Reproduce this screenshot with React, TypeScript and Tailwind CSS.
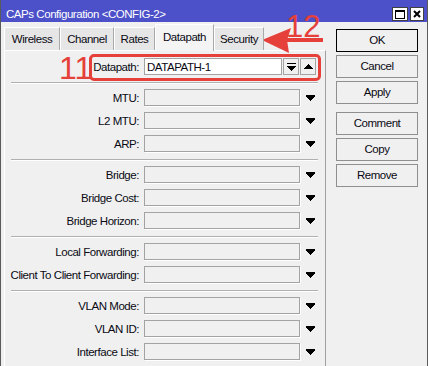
import React from "react";

function DownTri() {
  return (
    <svg width="9" height="6" viewBox="0 0 9 6" shapeRendering="crispEdges">
      <path d="M0 0h9v2h-1v1h-1v1h-1v1h-1v1h-1v-1h-1v-1h-1v-1h-1v-1h-1z" fill="#000" />
    </svg>
  );
}

function UpTri() {
  return (
    <svg width="9" height="5" viewBox="0 0 9 5" shapeRendering="crispEdges">
      <path d="M4 0h1v1h1v1h1v1h1v1h1v1h-9v-1h1v-1h1v-1h1v-1h1z" fill="#000" />
    </svg>
  );
}

function BarDown() {
  return (
    <svg width="9" height="8" viewBox="0 0 9 8" shapeRendering="crispEdges">
      <rect x="0" y="0" width="9" height="1" fill="#000" />
      <path d="M0 3h9v1h-1v1h-1v1h-1v1h-1v1h-1v-1h-1v-1h-1v-1h-1v-1h-1z" fill="#000" />
    </svg>
  );
}

function Row({ label }: { label: string }) {
  return (
    <div className="flex h-[17px] items-start">
      <div className="w-[134px] text-right leading-[19px] whitespace-nowrap">{label}</div>
      <div className="ml-[5px] w-[156px] h-[17px] border border-[#a3a3a3] bg-[#f0f0f0] shadow-[1px_1px_0_#ffffff]" />
      <div className="w-[21px] h-[17px] flex items-center justify-center">
        <DownTri />
      </div>
    </div>
  );
}

function Sep() {
  return <div className="ml-[6px] w-[307px] h-[2px] border-t border-[#b0b0b0] border-b border-b-white mt-[7px] mb-[5px]" />;
}

function Btn({ label, def, cls }: { label: string; def?: boolean; cls?: string }) {
  return (
    <div
      className={
        "w-[82px] h-[23px] flex items-center justify-center bg-[#f0f0f0] border " +
        (def ? "border-black " : "border-[#8f8f8f] ") +
        (cls ?? "")
      }
    >
      {label}
    </div>
  );
}

export default function App() {
  return (
    <div className="relative w-[428px] h-[366px] overflow-hidden bg-[#f0f0f0] font-['Liberation_Sans',Arial,sans-serif] text-[11.5px] tracking-[-0.45px] text-[#0a0a14]">
      <div className="w-[428px] h-[366px] border-l border-r border-[#5a5a5a] flex flex-col">
        {/* Title bar */}
        <div className="h-[22px] bg-[#4c50c9] flex items-start">
          <div className="pl-[5px] pt-[8px] leading-[13px] text-white flex-1 whitespace-nowrap">
            CAPs Configuration &lt;CONFIG-2&gt;
          </div>
          <div className="flex gap-[2px] pt-[7px] pr-[3px]">
            <div className="w-[16px] h-[14px] bg-white border border-[#404040] flex items-center justify-center">
              <div className="w-[10px] h-[9px] border border-black border-t-2" />
            </div>
            <div className="w-[14px] h-[14px] bg-white border border-[#404040] flex items-center justify-center">
              <svg width="8" height="8" viewBox="0 0 8 8">
                <path d="M1 1L7 7M7 1L1 7" stroke="#000" strokeWidth="2" />
              </svg>
            </div>
          </div>
        </div>

        {/* Body */}
        <div className="flex flex-1">
          {/* Left: tabs + panel */}
          <div className="ml-[3px] w-[322px] flex flex-col">
            <div className="h-[28px] pt-[2px] flex items-start relative z-10">
              <div className="mt-[3px] w-[56px] h-[23px] leading-[23px] text-center bg-[#e6e6e6] border-t border-l border-white border-r border-r-[#a9a9a9]">Wireless</div>
              <div className="mt-[3px] w-[54px] h-[23px] leading-[23px] text-center bg-[#e6e6e6] border-t border-l border-white border-r border-r-[#a9a9a9]">Channel</div>
              <div className="mt-[3px] w-[41px] h-[23px] leading-[23px] text-center bg-[#e6e6e6] border-t border-l border-white border-r border-r-[#a9a9a9]">Rates</div>
              <div className="w-[59px] h-[27px] pt-[1px] leading-[23px] text-center bg-[#f4f4f4] border-t border-l border-white border-r border-r-[#a9a9a9]">Datapath</div>
              <div className="mt-[3px] w-[50px] h-[23px] leading-[23px] text-center bg-[#e6e6e6] border-t border-l border-white border-r border-r-[#a9a9a9]">Security</div>
            </div>
            <div className="flex-1 border-t border-l border-white border-r border-r-[#a0a0a0] pt-[7px] flex flex-col">
              {/* Datapath row */}
              <div className="flex h-[17px] items-start">
                <div className="w-[134px] text-right leading-[19px]">Datapath:</div>
                <div className="ml-[5px] w-[138px] h-[17px] bg-white border border-[#a3a3a3] pl-[2px] leading-[16px]">DATAPATH-1</div>
                <div className="ml-[1px] w-[16px] h-[17px] border border-[#a3a3a3] bg-[#f0f0f0] flex items-center justify-center">
                  <BarDown />
                </div>
                <div className="ml-[1px] w-[16px] h-[17px] border border-[#a3a3a3] bg-[#f0f0f0] flex items-center justify-center">
                  <UpTri />
                </div>
              </div>
              <Sep />
              <div className="flex flex-col gap-[6px]">
                <Row label="MTU:" />
                <Row label="L2 MTU:" />
                <Row label="ARP:" />
              </div>
              <Sep />
              <div className="flex flex-col gap-[6px]">
                <Row label="Bridge:" />
                <Row label="Bridge Cost:" />
                <Row label="Bridge Horizon:" />
              </div>
              <Sep />
              <div className="flex flex-col gap-[6px]">
                <Row label="Local Forwarding:" />
                <Row label="Client To Client Forwarding:" />
              </div>
              <Sep />
              <div className="flex flex-col gap-[6px]">
                <Row label="VLAN Mode:" />
                <Row label="VLAN ID:" />
                <Row label="Interface List:" />
              </div>
            </div>
          </div>

          {/* Right: buttons */}
          <div className="ml-[10px] pt-[7px] flex flex-col gap-[3px]">
            <Btn label="OK" def />
            <Btn label="Cancel" />
            <Btn label="Apply" />
            <Btn label="Comment" cls="mt-[5px]" />
            <Btn label="Copy" />
            <Btn label="Remove" />
          </div>
        </div>
      </div>

      {/* Annotations */}
      <div className="absolute left-[89px] top-[54px] w-[232px] h-[27px] border-[3px] border-[#e5403a] rounded-[5px] pointer-events-none" />
      <div className="absolute left-[59px] top-[52px] text-[32px] leading-[32px] tracking-normal text-[#e5403a]">11</div>
      <div className="absolute left-[286px] top-[11px] text-[31px] leading-[31px] tracking-normal text-[#e5403a]">12</div>
      <svg className="absolute left-0 top-0 pointer-events-none" width="428" height="366">
        <polygon points="262,40 291,28 287,40 289,53" fill="#e5403a" />
        <rect x="284" y="38" width="39" height="4" fill="#e5403a" />
      </svg>
    </div>
  );
}
